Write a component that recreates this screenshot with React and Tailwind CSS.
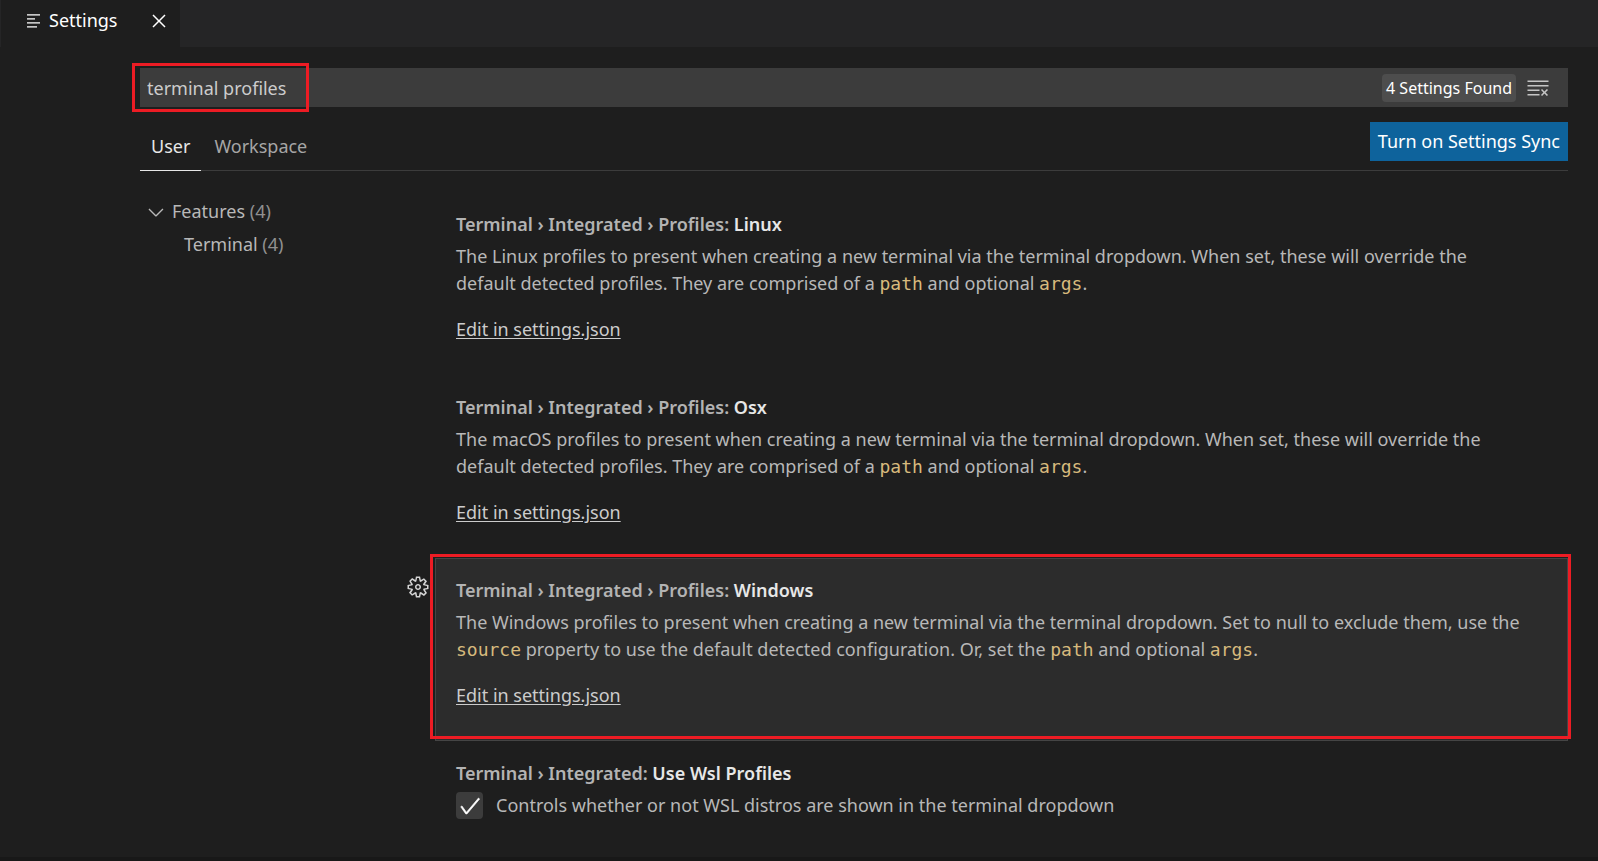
import { useState } from "react";
import { VscClearAll, VscGear, VscCheck, VscChevronDown, VscClose } from "react-icons/vsc";

function ListIcon() {
  return (
    <svg viewBox="0 0 14 14" className="h-[14px] w-[14px]" fill="#c5c5c5" aria-hidden="true">
      <rect x="0" y="0" width="13" height="1.7" />
      <rect x="0" y="4" width="8" height="1.7" />
      <rect x="0" y="8" width="13" height="1.7" />
      <rect x="0" y="12" width="10" height="1.7" />
    </svg>
  );
}

function Code({ children }) {
  return (
    <code className="font-['DejaVu_Sans_Mono',monospace] text-[18px] leading-5 text-[#d7ba7d]">{children}</code>
  );
}

function Highlight({ className }) {
  return (
    <span
      aria-hidden="true"
      className={`pointer-events-none absolute border-3 border-[#ed1c24] ${className}`}
    />
  );
}

function Title({ category, name }) {
  return (
    <h2 className="text-[18px] leading-6 font-semibold text-[#b3b3b3]">
      {category}: <span className="text-[#e7e7e7]">{name}</span>
    </h2>
  );
}

function Setting({ category, name, active, children }) {
  return (
    <section
      className={`relative h-[183px] border px-5 pt-[19px] ${
        active ? "border-[#454545] bg-[#2c2c2c]" : "border-transparent"
      }`}
    >
      {active && (
        <>
          <button
            type="button"
            aria-label="More actions"
            className="absolute top-4 -left-[30px] text-[#d4d4d4]"
          >
            <VscGear className="size-6" />
          </button>
          <Highlight className="-top-[5px] -right-1 bottom-px -left-1.5" />
        </>
      )}
      <Title category={category} name={name} />
      <p className="mt-[7px] pr-6 leading-[27px]">{children}</p>
      <a href="#settings-json" className="mt-5 inline-block leading-6 text-[#cccccc] underline underline-offset-2">
        Edit in settings.json
      </a>
    </section>
  );
}

export default function App() {
  const [query, setQuery] = useState("terminal profiles");
  const [useWsl, setUseWsl] = useState(true);

  return (
    <div className="flex min-h-screen flex-col border-b-4 border-[#181818] bg-[#1e1e1e] font-['Noto_Sans',sans-serif] text-[18px] text-[#b8b8b8]">
      <header className="flex h-[47px] bg-[#252526] pl-px">
        <div className="flex w-[179px] items-center bg-[#1e1e1e] pb-1.5 pl-[26px]">
          <ListIcon />
          <span className="ml-2 text-white">Settings</span>
          <button type="button" aria-label="Close" className="mr-[9px] ml-auto text-white">
            <VscClose className="size-6" />
          </button>
        </div>
      </header>

      <main className="pt-[21px] pr-[30px] pl-[140px]">
        <div className="relative flex h-[39px] items-center bg-[#3c3c3c] pr-[18px]">
          <input
            type="text"
            aria-label="Search settings"
            value={query}
            onChange={(e) => setQuery(e.target.value)}
            className="h-full min-w-0 flex-1 bg-transparent pl-[7px] text-[#cccccc] outline-none"
          />
          <span className="flex h-7 items-center rounded-sm bg-[#4d4d4d] px-1 text-[16px] text-white">
            4 Settings Found
          </span>
          <button type="button" aria-label="Clear search" className="ml-2.5 text-[#c5c5c5]">
            <VscClearAll className="size-6" />
          </button>
          <Highlight className="-top-[5px] -bottom-[5px] -left-2 w-[177px]" />
        </div>

        <div className="mt-[15px] flex h-[49px] items-start border-b border-[#3c3c3c]">
          <button type="button" className="h-[49px] border-b border-[#e7e7e7] px-[11px] text-[#e7e7e7]">
            User
          </button>
          <button type="button" className="h-[49px] px-[13px] text-[#a6a6a6]">
            Workspace
          </button>
          <button type="button" className="ml-auto h-[39px] bg-[#0e639c] px-2 text-white">
            Turn on Settings Sync
          </button>
        </div>

        <div className="flex pt-[21px]">
          <nav aria-label="Settings sections" className="w-[295px] shrink-0 pt-[3px] pl-1">
            <button type="button" className="flex h-[33px] items-center">
              <VscChevronDown className="size-6" />
              <span className="ml-1">
                Features <span className="text-[#909090]">(4)</span>
              </span>
            </button>
            <button type="button" className="flex h-[33px] items-center pl-10">
              <span>
                Terminal <span className="text-[#909090]">(4)</span>
              </span>
            </button>
          </nav>

          <div className="min-w-0 flex-1">
            <Setting category="Terminal › Integrated › Profiles" name="Linux">
              The Linux profiles to present when creating a new terminal via the terminal dropdown. When
              set, these will override the default detected profiles. They are comprised of a{" "}
              <Code>path</Code> and optional <Code>args</Code>.
            </Setting>
            <Setting category="Terminal › Integrated › Profiles" name="Osx">
              The macOS profiles to present when creating a new terminal via the terminal dropdown. When
              set, these will override the default detected profiles. They are comprised of a{" "}
              <Code>path</Code> and optional <Code>args</Code>.
            </Setting>
            <Setting category="Terminal › Integrated › Profiles" name="Windows" active>
              The Windows profiles to present when creating a new terminal via the terminal dropdown. Set
              to null to exclude them, use the <Code>source</Code> property to use the default detected
              configuration. Or, set the <Code>path</Code> and optional <Code>args</Code>.
            </Setting>
            <section className="px-[21px] pt-5">
              <Title category="Terminal › Integrated" name="Use Wsl Profiles" />
              <label className="mt-[7px] flex items-center gap-[13px] leading-[27px]">
                <span className="relative flex size-[27px] items-center justify-center">
                  <input
                    type="checkbox"
                    checked={useWsl}
                    onChange={(e) => setUseWsl(e.target.checked)}
                    className="absolute inset-0 appearance-none rounded-sm bg-[#3c3c3c]"
                  />
                  {useWsl && (
                    <VscCheck className="pointer-events-none relative size-6 stroke-[0.4] text-white" />
                  )}
                </span>
                Controls whether or not WSL distros are shown in the terminal dropdown
              </label>
            </section>
          </div>
        </div>
      </main>
    </div>
  );
}
